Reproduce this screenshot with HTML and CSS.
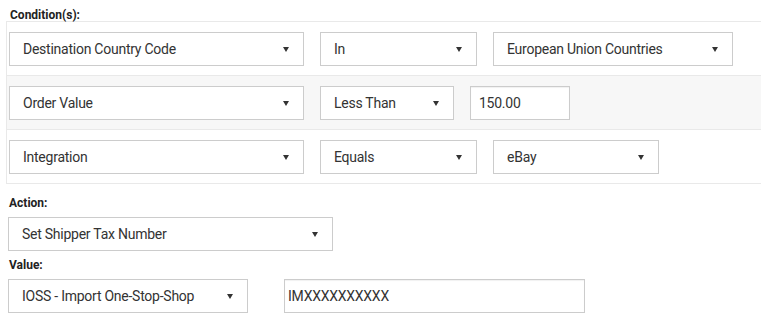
FILE: index.html
```html
<!DOCTYPE html>
<html>
<head>
<meta charset="utf-8">
<link rel="stylesheet" href="styles.css">
</head>
<body>
<div class="page">
  <div class="label label-cond">Condition(s):</div>
  <div class="conditions">
    <div class="row">
      <div class="select w-field"><span>Destination Country Code</span><i class="caret"></i></div>
      <div class="select w-op"><span>In</span><i class="caret"></i></div>
      <div class="select w-eu"><span>European Union Countries</span><i class="caret"></i></div>
    </div>
    <div class="row row-alt">
      <div class="select w-field"><span>Order Value</span><i class="caret"></i></div>
      <div class="select w-less"><span>Less Than</span><i class="caret"></i></div>
      <input class="input w-amount" type="text" value="150.00">
    </div>
    <div class="row">
      <div class="select w-field"><span>Integration</span><i class="caret"></i></div>
      <div class="select w-op"><span>Equals</span><i class="caret"></i></div>
      <div class="select w-ebay"><span>eBay</span><i class="caret"></i></div>
    </div>
  </div>
  <div class="label label-action">Action:</div>
  <div class="select w-action"><span>Set Shipper Tax Number</span><i class="caret"></i></div>
  <div class="label label-value">Value:</div>
  <div class="value-row">
    <div class="select w-ioss"><span>IOSS - Import One-Stop-Shop</span><i class="caret"></i></div>
    <input class="input input-tight w-tax" type="text" value="IMXXXXXXXXXX">
  </div>
</div>
</body>
</html>
```
FILE: styles.css
```css
html, body {
  margin: 0;
  padding: 0;
  background: #fff;
  overflow: hidden;
}
body {
  font-family: Roboto, "Liberation Sans", sans-serif;
  font-size: 14px;
  color: #333;
}
.label {
  font-weight: bold;
  font-size: 12px;
  color: #222;
}
.label-cond {
  padding: 9px 0 0 10px;
  line-height: 12px;
}
.label-action {
  padding: 11px 0 6px 9px;
  line-height: 16px;
}
.label-value {
  padding: 6px 0 6px 9px;
  line-height: 16px;
}
.conditions {
  margin-left: 6px;
  border: 1px solid #e9e9e9;
  border-right: none;
}
.row {
  display: flex;
  gap: 16px;
  padding: 10px 2px 9px;
  border-bottom: 1px solid #e9e9e9;
}
.row:last-child {
  border-bottom: none;
}
.row-alt {
  background: #f7f7f7;
}
.select {
  box-sizing: border-box;
  flex: none;
  height: 34px;
  border: 1px solid #cccccc;
  background: #fff;
  display: flex;
  align-items: center;
  justify-content: space-between;
  padding: 0 14px 0 13px;
  letter-spacing: -0.25px;
  white-space: nowrap;
}
.caret {
  width: 0;
  height: 0;
  border-left: 3.5px solid transparent;
  border-right: 3.5px solid transparent;
  border-top: 5px solid #333;
  margin-top: 1px;
}
.input {
  box-sizing: border-box;
  flex: none;
  height: 34px;
  border: 1px solid #cccccc;
  box-shadow: inset 0 1px 1px rgba(0, 0, 0, 0.06);
  background: #fff;
  font-family: inherit;
  font-size: 14px;
  color: #333;
  letter-spacing: -0.25px;
  padding: 0 8px;
  margin: 0;
  outline: none;
}
.input-tight {
  padding: 0 3px;
}
.w-field { width: 295px; }
.w-op { width: 157px; }
.w-eu { width: 240px; }
.w-less { width: 134px; }
.w-amount { width: 100px; }
.w-ebay { width: 166px; }
.w-action {
  width: 325px;
  margin-left: 8px;
}
.value-row {
  display: flex;
  gap: 36px;
  margin-left: 8px;
}
.w-ioss { width: 240px; }
.w-tax { width: 301px; }
```
